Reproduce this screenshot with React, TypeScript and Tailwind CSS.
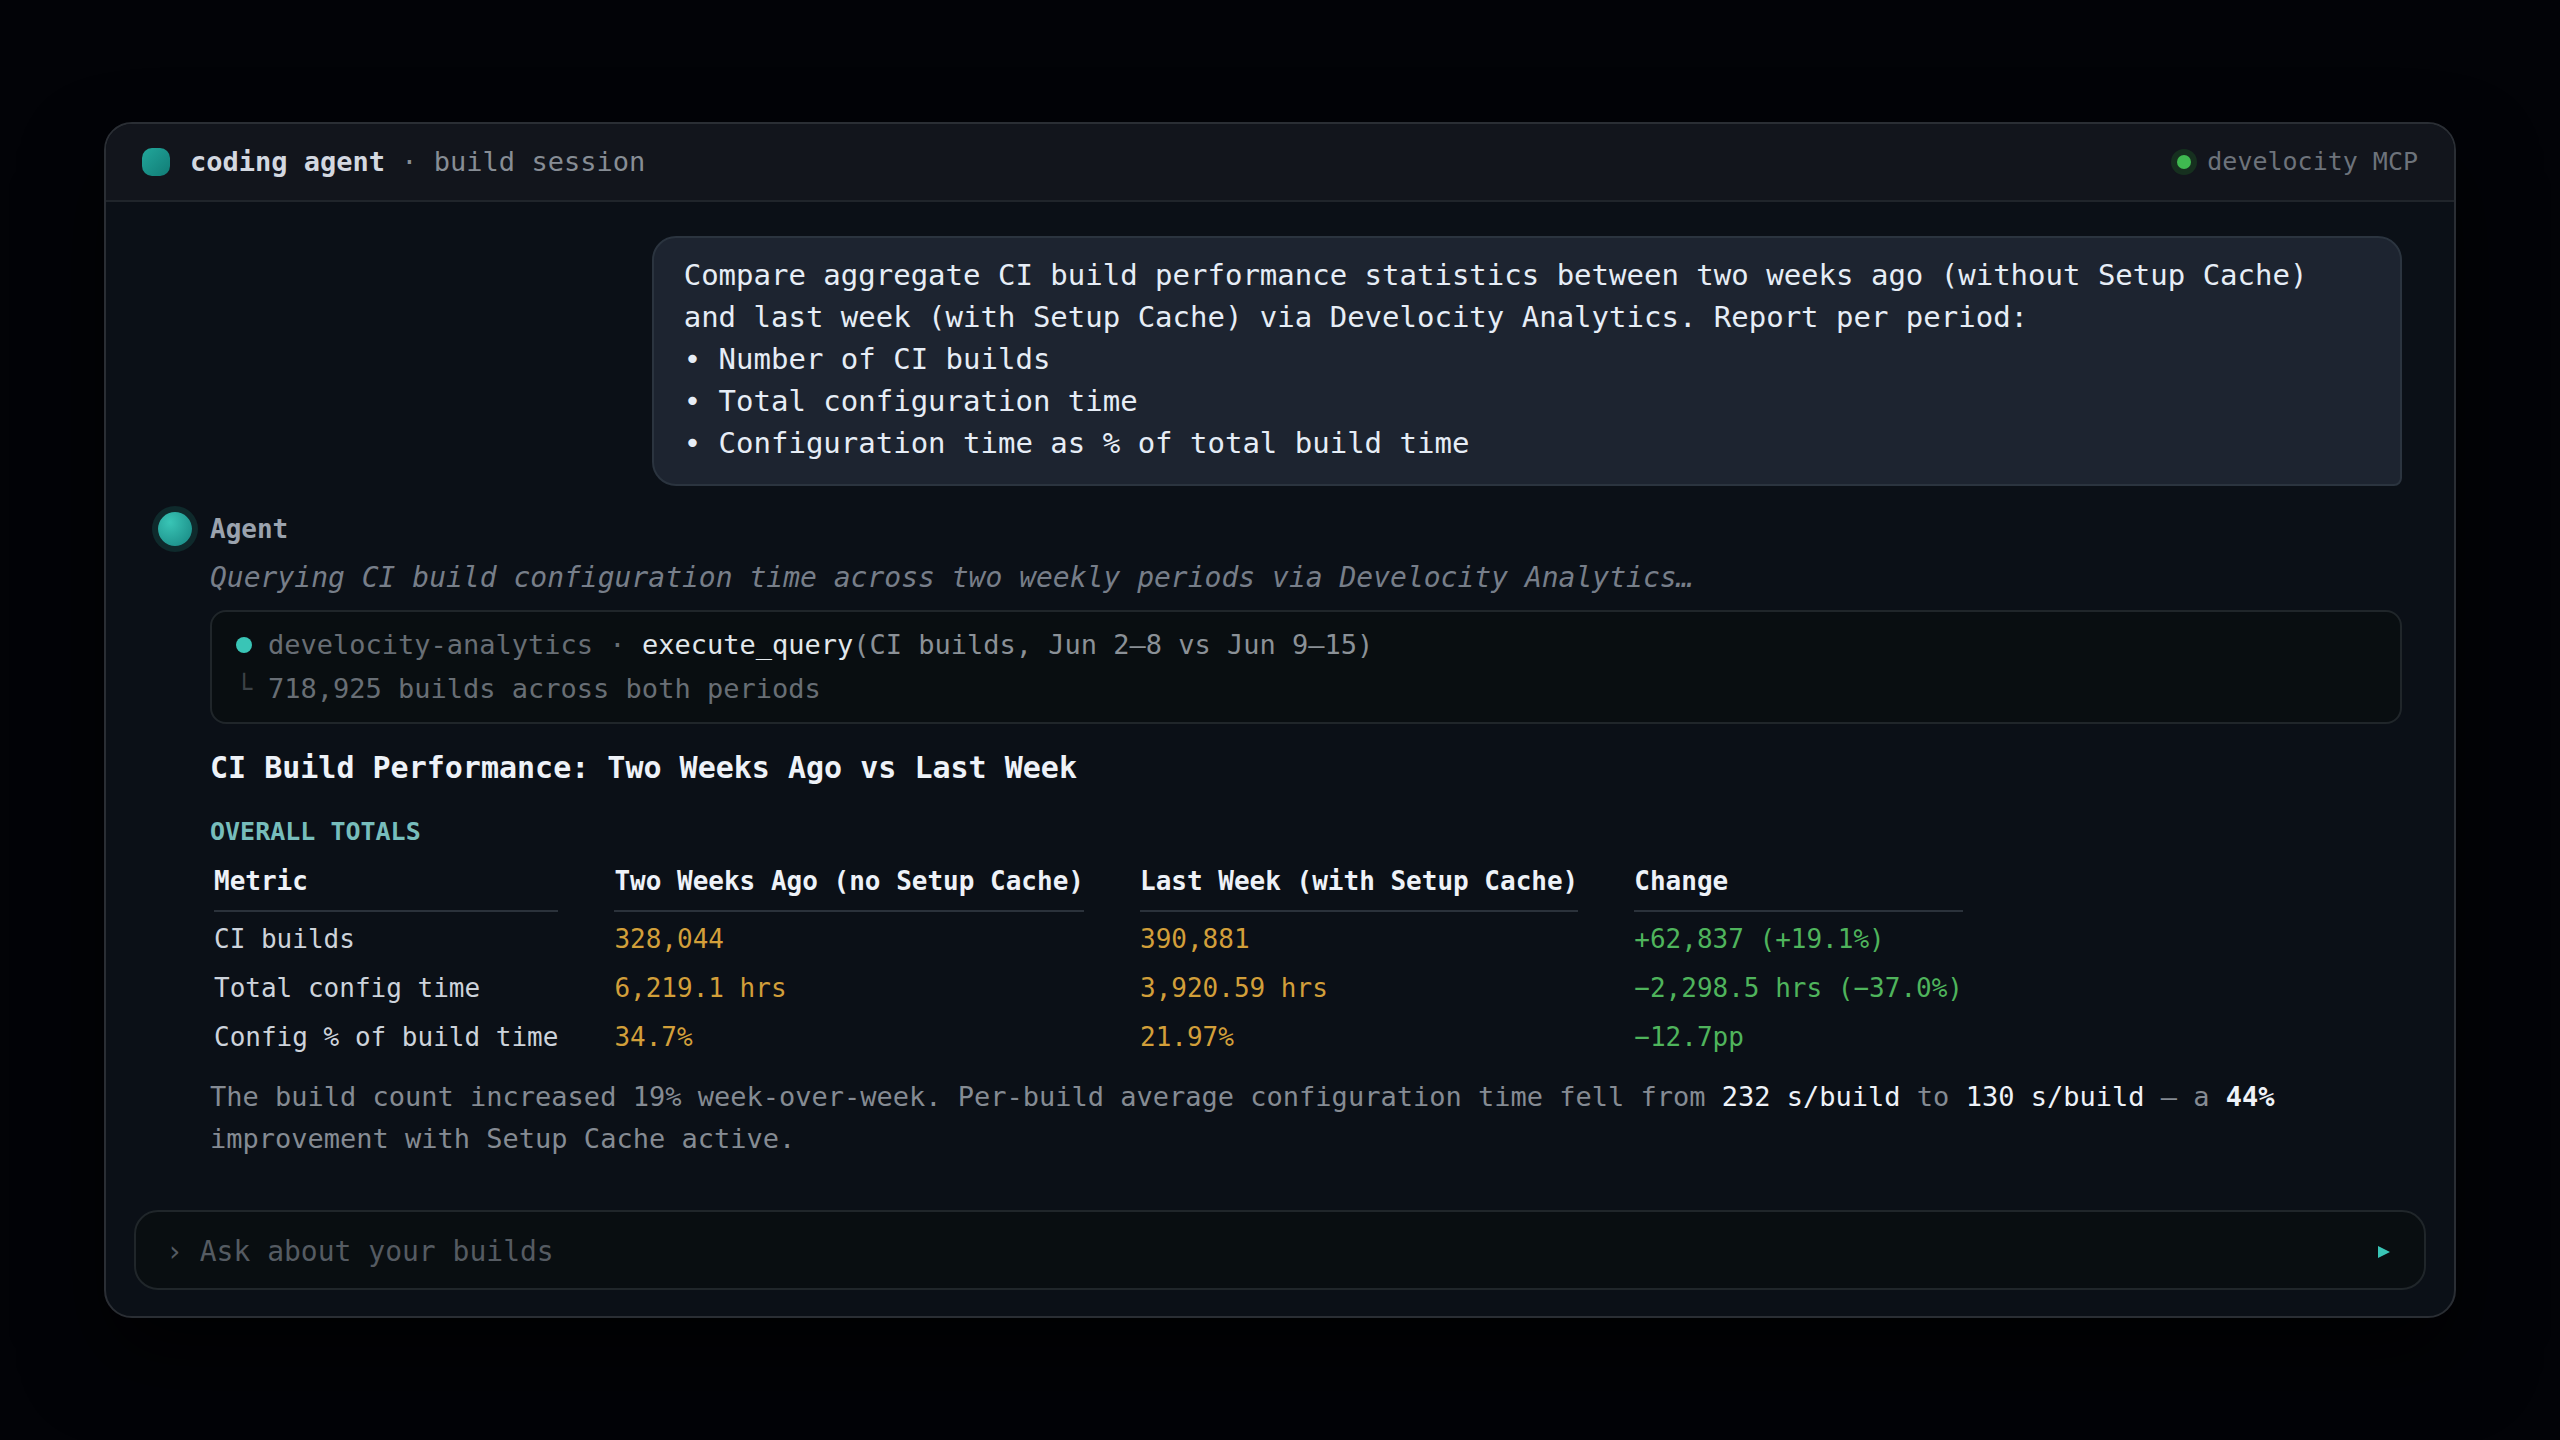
import React from "react";

interface MetricRow {
  metric: string;
  before: string;
  after: string;
  change: string;
}

const columns = [
  "Metric",
  "Two Weeks Ago (no Setup Cache)",
  "Last Week (with Setup Cache)",
  "Change",
];

const rows: MetricRow[] = [
  {
    metric: "CI builds",
    before: "328,044",
    after: "390,881",
    change: "+62,837 (+19.1%)",
  },
  {
    metric: "Total config time",
    before: "6,219.1 hrs",
    after: "3,920.59 hrs",
    change: "−2,298.5 hrs (−37.0%)",
  },
  {
    metric: "Config % of build time",
    before: "34.7%",
    after: "21.97%",
    change: "−12.7pp",
  },
];

const requested = [
  "Number of CI builds",
  "Total configuration time",
  "Configuration time as % of total build time",
];

function Header() {
  return (
    <header className="flex items-center justify-between border-b-2 border-[#20252b] bg-[#12151c] px-9 py-[22px]">
      <div className="flex items-center gap-5">
        <span className="size-7 rounded-[10px] bg-linear-to-br from-[#22a79b] to-[#117c76]" />
        <h1 className="text-[27px] leading-8 text-[#878d95]">
          <span className="font-bold text-[#d3d8e0]">coding agent</span> · build
          session
        </h1>
      </div>
      <div className="flex items-center gap-4">
        <span className="size-[14px] rounded-full bg-[#3fb950] ring-6 ring-[#16301f]" />
        <span className="text-[25px] leading-8 text-[#6d737b]">
          develocity MCP
        </span>
      </div>
    </header>
  );
}

function UserMessage() {
  return (
    <div className="max-w-[78%] self-end rounded-3xl rounded-br-lg border-2 border-[#2b343f] bg-[#1d2430] px-[30px] pt-4 pb-5 text-[29px] leading-[42px] text-[#e6edf6]">
      <p>
        Compare aggregate CI build performance statistics between two weeks ago
        (without Setup Cache) and last week (with Setup Cache) via Develocity
        Analytics. Report per period:
      </p>
      <ul>
        {requested.map((item) => (
          <li key={item}>• {item}</li>
        ))}
      </ul>
    </div>
  );
}

function ToolCall() {
  return (
    <div className="mt-3 grid grid-cols-[auto_1fr] items-center gap-x-4 rounded-2xl border-2 border-[#20262a] bg-[#090e11] px-6 py-[11px] text-[27px] leading-[44px] text-[#686e75]">
      <span className="size-4 rounded-full bg-[#39c5b6]" />
      <p>
        develocity-analytics · <span className="text-[#e2e8ec]">execute_query</span>
        <span className="text-[#8b9197]">(CI builds, Jun 2–8 vs Jun 9–15)</span>
      </p>
      <span className="w-4 text-center text-[#3c4247]">└</span>
      <p>718,925 builds across both periods</p>
    </div>
  );
}

function TotalsTable() {
  return (
    <table className="mt-4 text-left text-[26px]">
      <thead>
        <tr>
          {columns.map((column) => (
            <th key={column} className="pr-[52px] pb-[3px] pl-1 font-bold">
              <div className="border-b-2 border-[#2b323b] pb-3 leading-[34px] text-[#eef2f8]">
                {column}
              </div>
            </th>
          ))}
        </tr>
      </thead>
      <tbody className="leading-[49px]">
        {rows.map((row) => (
          <tr key={row.metric}>
            <td className="pr-[52px] pl-1 text-[#cdd3db]">{row.metric}</td>
            <td className="pr-[52px] pl-1 text-[#d29f3a]">{row.before}</td>
            <td className="pr-[52px] pl-1 text-[#d29f3a]">{row.after}</td>
            <td className="pr-[52px] pl-1 text-[#4fb45c]">{row.change}</td>
          </tr>
        ))}
      </tbody>
    </table>
  );
}

function AgentMessage() {
  return (
    <div className="mt-[26px] flex items-start gap-[18px]">
      <span className="size-[34px] shrink-0 rounded-full bg-radial-[at_35%_30%] from-[#39c5b6] to-[#168480] ring-6 ring-[#0f2a2c]" />
      <div className="min-w-0 flex-1">
        <p className="text-[26px] leading-[34px] font-bold text-[#9ba3ae]">
          Agent
        </p>
        <p className="mt-3 text-[28px] leading-10 text-[#777e89] italic">
          Querying CI build configuration time across two weekly periods via
          Develocity Analytics…
        </p>
        <ToolCall />
        <h2 className="mt-6 text-[30px] leading-10 font-bold text-[#eef2f8]">
          CI Build Performance: Two Weeks Ago vs Last Week
        </h2>
        <h3 className="mt-7 text-[25px] leading-8 font-bold text-[#77bdbb] uppercase">
          Overall totals
        </h3>
        <TotalsTable />
        <p className="mt-[14px] text-[27px] leading-[42px] text-[#858b93]">
          The build count increased 19% week-over-week. Per-build average
          configuration time fell from{" "}
          <span className="text-[#eef2f8]">232 s/build</span> to{" "}
          <span className="text-[#eef2f8]">130 s/build</span> — a{" "}
          <strong className="font-bold text-[#eef2f8]">44%</strong> improvement
          with Setup Cache active.
        </p>
      </div>
    </div>
  );
}

function Prompt() {
  return (
    <form
      className="mx-7 mb-[26px] flex items-center rounded-3xl border-2 border-[#20262a] bg-[#090e11] px-[30px] pt-5 pb-4 text-[28px] leading-10 text-[#555b62]"
      onSubmit={(e) => e.preventDefault()}
    >
      <label htmlFor="prompt" className="whitespace-pre">
        {"› "}
      </label>
      <input
        id="prompt"
        type="text"
        placeholder="Ask about your builds"
        className="h-10 min-w-0 flex-1 bg-transparent text-[#e6edf6] outline-none placeholder:text-[#555b62]"
      />
      <button type="submit" aria-label="Send" className="px-1">
        <svg viewBox="0 0 12 12" className="size-3 fill-[#39c5b6]">
          <path d="M0 0L12 6L0 12Z" />
        </svg>
      </button>
    </form>
  );
}

export default function App() {
  return (
    <div className="flex min-h-screen items-center bg-[#020307] px-[104px] font-['DejaVu_Sans_Mono',monospace]">
      <main className="w-full overflow-hidden rounded-[28px] border-2 border-[#2a2e34] bg-[#0b1017] shadow-[0_40px_80px_rgba(0,0,0,0.7)]">
        <Header />
        <div className="flex flex-col px-[52px] pt-[34px] pb-[50px]">
          <UserMessage />
          <AgentMessage />
        </div>
        <Prompt />
      </main>
    </div>
  );
}
